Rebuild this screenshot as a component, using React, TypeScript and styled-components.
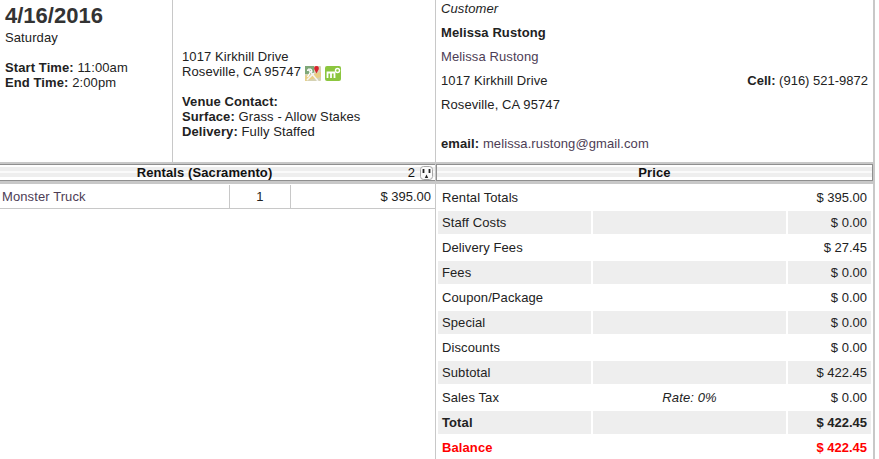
import React from 'react';
import styled, { createGlobalStyle } from 'styled-components';

const GlobalStyle = createGlobalStyle`
  html, body {
    margin: 0;
    padding: 0;
    background: #ffffff;
  }
  body {
    font-family: "Liberation Sans", Arial, sans-serif;
    font-size: 13px;
    letter-spacing: 0.1px;
    color: #222222;
  }
`;

const Page = styled.div`
  width: 875px;
  height: 459px;
  overflow: hidden;
`;

const TopRow = styled.div`
  display: grid;
  grid-template-columns: 173px 263px 1fr;
  height: 162px;
`;

const DateCol = styled.div`
  border-right: 1px solid #c8c8c8;
  padding: 4px 0 0 5px;
`;

const DateTitle = styled.div`
  font-size: 22px;
  font-weight: 700;
  line-height: 24px;
  letter-spacing: 0;
  color: #333333;
`;

const DayName = styled.div`
  line-height: 16px;
  margin: 2px 0 14px;
`;

const Line = styled.div`
  height: 15px;
  line-height: 15px;
`;

const VenueCol = styled.div`
  border-right: 1px solid #c8c8c8;
  padding: 49px 0 0 9px;
`;

const VenueBlock = styled.div`
  margin-bottom: 15px;
`;

const Icons = styled.span`
  display: inline-flex;
  gap: 4px;
  margin-left: 4px;
  vertical-align: -5px;
`;

const CustomerCol = styled.div`
  border-right: 2px solid #c8c8c8;
  padding: 1px 5px 0 5px;
`;

const CustomerTitle = styled.div`
  line-height: 16px;
  margin-bottom: 4px;
  font-style: italic;
`;

const CustomerLine = styled.div<{ $gap?: number }>`
  display: flex;
  justify-content: space-between;
  line-height: 24px;
  margin-top: ${(p) => p.$gap ?? 0}px;
`;

const CellPhone = styled.span`
  letter-spacing: 0;
`;

const Italic = styled.span`
  font-style: italic;
`;

const Muted = styled.span`
  color: #4d3d55;
`;

const ColumnsRow = styled.div`
  display: grid;
  grid-template-columns: 436px 1fr;
`;

const Header = styled.div<{ $boxed?: boolean; $inset?: number }>`
  position: relative;
  height: 17px;
  padding-right: ${(p) => p.$inset ?? 0}px;
  line-height: 17px;
  text-align: center;
  font-weight: 700;
  color: #111111;
  border-top: 2px solid #c8c8c8;
  border-bottom: 3px solid #c8c8c8;
  box-shadow: ${(p) =>
    p.$boxed
      ? 'inset 0 1px 0 #8f8f8f, inset 0 -1px 0 #8f8f8f, inset 1px 0 0 #8f8f8f, inset -1px 0 0 #8f8f8f'
      : 'inset 0 1px 0 #8f8f8f, inset 0 -1px 0 #8f8f8f'};
  background: linear-gradient(
    #ffffff 0 3px,
    #eeeeee 3px 7px,
    #fafafa 7px 9px,
    #eeeeee 9px 13px,
    #ffffff 13px
  );
`;

const HeaderCount = styled.span`
  position: absolute;
  right: 2px;
  top: 0;
  display: flex;
  align-items: center;
  gap: 5px;
  font-weight: 400;
  height: 17px;
`;

const RentalsCol = styled.div`
  border-right: 1px solid #c8c8c8;
`;

const RentalRow = styled.div`
  display: grid;
  grid-template-columns: 229px 61px 1fr;
  height: 23px;
  margin-top: 1px;
  line-height: 23px;
  border-bottom: 1px solid #c8c8c8;
`;

const RentalCell = styled.div<{ $align?: string }>`
  padding: ${(p) => (p.$align === 'center' ? '0' : '0 4px 0 2px')};
  text-align: ${(p) => p.$align ?? 'left'};
  letter-spacing: ${(p) => (p.$align === 'right' ? '0' : '0.1px')};
  & + & {
    border-left: 1px solid #c8c8c8;
  }
`;

const PriceCol = styled.div`
  border-right: 2px solid #c8c8c8;
  height: 297px;
`;

const PriceTable = styled.div`
  display: flex;
  flex-direction: column;
  gap: 2px;
  padding: 2px 0 0 2px;
`;

const PriceRow = styled.div<{ $tone?: string }>`
  display: grid;
  grid-template-columns: 153px 193px 83px;
  column-gap: 2px;
  height: 23px;
  line-height: 23px;
  font-weight: ${(p) => (p.$tone === 'total' || p.$tone === 'balance' ? 700 : 400)};
  color: ${(p) => (p.$tone === 'balance' ? '#ff0000' : '#222222')};
`;

const PriceCell = styled.div<{ $shaded?: boolean; $align?: string }>`
  background: ${(p) => (p.$shaded ? '#eeeeee' : 'transparent')};
  padding: 0 4px;
  text-align: ${(p) => p.$align ?? 'left'};
  letter-spacing: ${(p) => (p.$align === 'right' ? '0' : '0.1px')};
`;

const MapsIcon = () => (
  <svg width="16" height="15" viewBox="0 0 16 15">
    <rect width="16" height="15" rx="1" fill="#d5d2b4" />
    <path d="M0 10 L16 6 V11 L0 15Z" fill="#e8cf86" />
    <path d="M0 0 H9 V8 H0Z" fill="#7fa878" />
    <path d="M2.5 5 a2.2 2.2 0 1 1 4 1.5 M6 5 L2.5 11" fill="none" stroke="#ffffff" strokeWidth="1.3" />
    <path d="M3 3 L13 15 M2 14 L9 7" stroke="#f4f4f4" strokeWidth="1.6" />
    <path d="M11.5 0 C9.2 0 8.8 2 9.4 3.4 L11.5 7.5 L13.6 3.4 C14.2 2 13.8 0 11.5 0Z" fill="#d9232e" />
  </svg>
);

const MapQuestIcon = () => (
  <svg width="16" height="15" viewBox="0 0 16 15">
    <rect width="16" height="15" rx="2" fill="#8cc63f" />
    <path d="M2.5 12 V6.5 H9.5 V12 M6 6.5 V12" fill="none" stroke="#ffffff" strokeWidth="1.8" />
    <circle cx="12.5" cy="4.5" r="2" fill="none" stroke="#ffffff" strokeWidth="1.4" />
  </svg>
);

const OutletIcon = () => (
  <svg width="13" height="14" viewBox="0 0 13 14">
    <rect x="0.5" y="0.5" width="12" height="13" rx="3" fill="#fbfbfb" stroke="#a8a8a8" />
    <path d="M3.5 3 V7 M9.5 3 V7" stroke="#222222" strokeWidth="1.8" />
    <path d="M4.8 12 L6.5 8.5 L8.2 12Z" fill="#222222" />
  </svg>
);

const prices = [
  { label: 'Rental Totals', value: '$ 395.00' },
  { label: 'Staff Costs', value: '$ 0.00' },
  { label: 'Delivery Fees', value: '$ 27.45' },
  { label: 'Fees', value: '$ 0.00' },
  { label: 'Coupon/Package', value: '$ 0.00' },
  { label: 'Special', value: '$ 0.00' },
  { label: 'Discounts', value: '$ 0.00' },
  { label: 'Subtotal', value: '$ 422.45' },
  { label: 'Sales Tax', value: '$ 0.00', note: 'Rate: 0%' },
  { label: 'Total', value: '$ 422.45', tone: 'total' },
  { label: 'Balance', value: '$ 422.45', tone: 'balance' },
];

const App: React.FC = () => (
  <Page>
    <GlobalStyle />
    <TopRow>
      <DateCol>
        <DateTitle>4/16/2016</DateTitle>
        <DayName>Saturday</DayName>
        <Line><b>Start Time:</b> 11:00am</Line>
        <Line><b>End Time:</b> 2:00pm</Line>
      </DateCol>
      <VenueCol>
        <VenueBlock>
          <Line>1017 Kirkhill Drive</Line>
          <Line>
            Roseville, CA 95747
            <Icons>
              <MapsIcon />
              <MapQuestIcon />
            </Icons>
          </Line>
        </VenueBlock>
        <Line><b>Venue Contact:</b></Line>
        <Line><b>Surface:</b> Grass - Allow Stakes</Line>
        <Line><b>Delivery:</b> Fully Staffed</Line>
      </VenueCol>
      <CustomerCol>
        <CustomerTitle>Customer</CustomerTitle>
        <CustomerLine><b>Melissa Rustong</b></CustomerLine>
        <CustomerLine><Muted>Melissa Rustong</Muted></CustomerLine>
        <CustomerLine>
          <span>1017 Kirkhill Drive</span>
          <CellPhone><b>Cell:</b> (916) 521-9872</CellPhone>
        </CustomerLine>
        <CustomerLine>Roseville, CA 95747</CustomerLine>
        <CustomerLine $gap={15}>
          <span><b>email:</b> <Muted>melissa.rustong@gmail.com</Muted></span>
        </CustomerLine>
      </CustomerCol>
    </TopRow>
    <ColumnsRow>
      <RentalsCol>
        <Header $inset={26}>
          Rentals (Sacramento)
          <HeaderCount>2 <OutletIcon /></HeaderCount>
        </Header>
        <RentalRow>
          <RentalCell><Muted>Monster Truck</Muted></RentalCell>
          <RentalCell $align="center">1</RentalCell>
          <RentalCell $align="right">$ 395.00</RentalCell>
        </RentalRow>
      </RentalsCol>
      <PriceCol>
        <Header $boxed>Price</Header>
        <PriceTable>
          {prices.map((row, i) => {
            const shaded = i % 2 === 1;
            return (
              <PriceRow key={row.label} $tone={row.tone}>
                <PriceCell $shaded={shaded}>{row.label}</PriceCell>
                <PriceCell $shaded={shaded} $align="center">
                  {row.note && <Italic>{row.note}</Italic>}
                </PriceCell>
                <PriceCell $shaded={shaded} $align="right">{row.value}</PriceCell>
              </PriceRow>
            );
          })}
        </PriceTable>
      </PriceCol>
    </ColumnsRow>
  </Page>
);

export default App;
